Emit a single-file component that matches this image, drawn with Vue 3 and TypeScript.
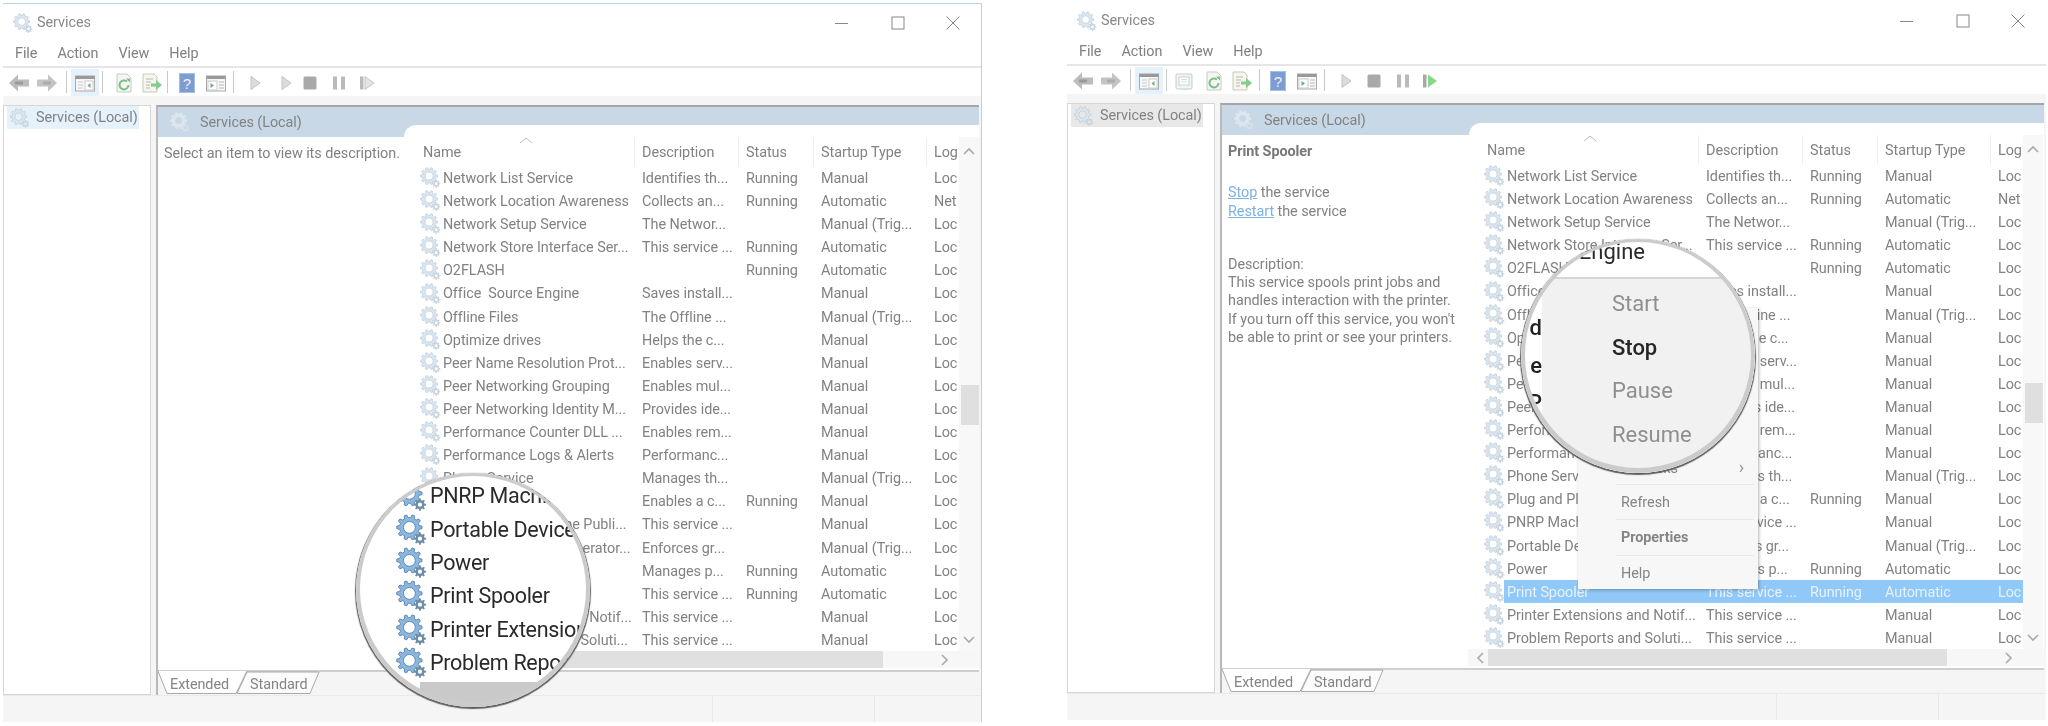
<template>
  <div class="page">
    <svg class="defs" width="0" height="0">
      <symbol id="gear" viewBox="0 0 22 22">
        <path class="gear-big" fill-rule="evenodd" :d="bigGear" />
        <path class="gear-small" fill-rule="evenodd" :d="smallGear" />
      </symbol>
    </svg>

    <section v-for="win in windows" :key="win.id" class="win" :class="win.id">
      <header class="titlebar">
        <svg class="gear title-gear"><use href="#gear" /></svg>
        <span class="title">Services</span>
        <div class="caption">
          <svg viewBox="0 0 16 16"><path d="M1 8.5h13" /></svg>
          <svg viewBox="0 0 16 16"><rect x="2" y="2" width="12" height="12" /></svg>
          <svg viewBox="0 0 16 16"><path d="M1.5 1.5l13 13M14.5 1.5l-13 13" /></svg>
        </div>
      </header>

      <nav class="menubar">
        <span>File</span><span>Action</span><span>View</span><span>Help</span>
      </nav>

      <div class="toolbar">
        <template v-for="(item, i) in win.tools" :key="i">
          <div v-if="item.icon === 'sep'" class="tool-sep" :style="{ width: item.w + 'px' }"><i></i></div>
          <div v-else class="tool" :class="{ active: item.icon === 'tree' }" :style="{ width: item.w + 'px' }">
            <svg viewBox="0 0 20 20" v-html="icons[item.icon]"></svg>
          </div>
        </template>
      </div>

      <div class="work">
        <aside class="tree">
          <div class="tree-item">
            <svg class="gear"><use href="#gear" /></svg>
            <span>Services (Local)</span>
          </div>
        </aside>

        <div class="panel">
          <div class="band">
            <svg class="gear band-gear"><use href="#gear" /></svg>
            <span class="band-label">Services (Local)</span>
            <div class="band-tab"></div>
          </div>

          <div class="body">
            <div v-if="win.id === 'first'" class="details">
              <p>Select an item to view its description.</p>
            </div>
            <div v-else class="details">
              <p class="details-name">Print Spooler</p>
              <p class="details-links"><a>Stop</a> the service<br /><a>Restart</a> the service</p>
              <p>
                Description:<br />
                This service spools print jobs and<br />
                handles interaction with the printer.<br />
                If you turn off this service, you won't<br />
                be able to print or see your printers.
              </p>
            </div>

            <div class="list">
              <div class="list-main">
                <div class="table">
                  <div class="thead">
                    <div class="th th-name">
                      Name
                      <svg class="sort" viewBox="0 0 14 7"><path d="M1 6l6-5 6 5" /></svg>
                    </div>
                    <div class="th">Description</div>
                    <div class="th">Status</div>
                    <div class="th">Startup Type</div>
                    <div class="th">Log</div>
                  </div>
                  <div
                    v-for="row in rows"
                    :key="row.name"
                    class="row"
                    :class="{ selected: win.id === 'second' && row.name === 'Print Spooler' }"
                  >
                    <div class="row-icon"><svg class="gear"><use href="#gear" /></svg></div>
                    <div class="cell">{{ row.name }}</div>
                    <div class="cell">{{ row.desc }}</div>
                    <div class="cell">{{ row.status }}</div>
                    <div class="cell">{{ row.startup }}</div>
                    <div class="cell">{{ row.log }}</div>
                  </div>
                </div>
                <div class="vscroll">
                  <svg viewBox="0 0 12 8"><path d="M1 7l5-5 5 5" /></svg>
                  <div class="vthumb"></div>
                  <svg class="vdown" viewBox="0 0 12 8"><path d="M1 1l5 5 5-5" /></svg>
                </div>
              </div>
              <div class="hscroll">
                <svg viewBox="0 0 8 12"><path d="M7 1L2 6l5 5" /></svg>
                <div class="hthumb"></div>
                <svg class="hright" viewBox="0 0 8 12"><path d="M1 1l5 5-5 5" /></svg>
              </div>
            </div>
          </div>

          <div class="tabs">
            <svg class="tab-shapes" viewBox="0 0 170 24">
              <path class="tab-back" d="M79 23.500L89 2h72l-9 21.500z" />
              <path class="tab-front" d="M0 1l9 22.500h69L89 1" />
            </svg>
            <span class="tab-extended">Extended</span>
            <span class="tab-standard">Standard</span>
          </div>
        </div>
      </div>

      <footer class="status">
        <div class="status-main"></div>
        <div class="status-mid"></div>
      </footer>
    </section>

    <!-- context menu of the second window -->
    <div class="menu">
      <div class="menu-top">
        <div v-for="t in ['Start', 'Stop', 'Pause', 'Resume', 'Restart']" :key="t" class="menu-item">{{ t }}</div>
        <div class="menu-item">All Tasks<span class="menu-arrow">›</span></div>
      </div>
      <div class="menu-item big sep">Refresh</div>
      <div class="menu-item big sep bold">Properties</div>
      <div class="menu-item big sep">Help</div>
    </div>

    <!-- magnifiers -->
    <div class="lens lens-list">
      <div v-for="name in lensNames" :key="name" class="lens-row">
        <svg class="gear lens-gear"><use href="#gear" /></svg>
        <span>{{ name }}</span>
      </div>
      <div class="lens-hthumb"></div>
    </div>

    <div class="lens lens-menu">
      <div class="lens-head">Engine</div>
      <div class="lens-main">
        <div class="lens-strip"><span>d</span><span>e</span><span>P</span></div>
        <div class="lens-items">
          <div>Start</div>
          <div class="on">Stop</div>
          <div>Pause</div>
          <div>Resume</div>
        </div>
      </div>
    </div>
  </div>
</template>

<script setup lang="ts">
type Tool = { icon: string; w: number }

// makes a toothed wheel path with a round hole in it
const gearPath = (cx: number, cy: number, ro: number, ri: number, teeth: number, hole: number) => {
  const step = (Math.PI * 2) / teeth
  let d = ''
  for (let i = 0; i < teeth; i++) {
    const a = i * step
    const pts = [
      [ri, a - step * 0.32],
      [ro, a - step * 0.16],
      [ro, a + step * 0.16],
      [ri, a + step * 0.32]
    ]
    pts.forEach(([r, t], j) => {
      const x = (cx + r * Math.cos(t)).toFixed(2)
      const y = (cy + r * Math.sin(t)).toFixed(2)
      d += `${i === 0 && j === 0 ? 'M' : 'L'}${x} ${y}`
    })
  }
  d += `ZM${cx - hole} ${cy}a${hole} ${hole} 0 1 0 ${hole * 2} 0a${hole} ${hole} 0 1 0 ${-hole * 2} 0Z`
  return d
}

const bigGear = gearPath(9.5, 9.5, 9, 7, 10, 4.2)
const smallGear = gearPath(17, 17.5, 4.4, 3.2, 8, 1.5)

const icons: Record<string, string> = {
  back: '<path d="M0 10l9-8.500V6.500h11v7H9v5z" fill="#bcbcbc"/><path d="M6 8.500h8v3H6z" fill="#9a9a9a"/>',
  fwd: '<path d="M20 10l-9-8.500V6.500H0v7h11v5z" fill="#c4c4c4"/><path d="M6 8.500h8v3H6z" fill="#adadad"/>',
  tree: '<rect x=".5" y="3" width="19" height="15" fill="#f7f7f7" stroke="#aaa"/><path d="M.5 3h19v3H.5z" fill="#999"/><path d="M3 9h5M3 12h5M3 15h5" stroke="#ccc"/><rect x="10" y="8" width="8" height="9" fill="#fff" stroke="#ccc"/><path d="M15.500 10v5l-3-2.500z" fill="#6fae7d"/>',
  props: '<rect x="2" y="3" width="16" height="15" rx="1" fill="#f2f5f6" stroke="#c3cdd2"/><rect x="5" y="6" width="10" height="8" fill="#fff" stroke="#c9d2d6"/><path d="M7 8.500h6M7 11h6M8 18.500h6" stroke="#cfe3dc"/>',
  refresh: '<path d="M3 1h10l4 4v14H3z" fill="#f5f6f3" stroke="#c5cbc5"/><path d="M14.500 12a4.500 4.500 0 1 1-1.500-3.400" fill="none" stroke="#79c184" stroke-width="2"/><path d="M12 5.500h4v4z" fill="#79c184"/>',
  export: '<path d="M1 1h11l3 3v15H1z" fill="#f7f6ee" stroke="#cbc8b8"/><path d="M4 6h7M4 9h5M4 12h4M4 15h4" stroke="#b9b9ad"/><path d="M9 10.500h5V7l6 5-6 5v-3.500H9z" fill="#86cc8b"/>',
  help: '<rect x="2" y="0" width="16" height="20" fill="#7c9cd2"/><path d="M2.500.5h15v19h-15z" fill="none" stroke="#a9bfe2"/><text x="10" y="15.500" text-anchor="middle" font-size="15" font-family="Liberation Sans, sans-serif" fill="#eef3fb">?</text>',
  view: '<rect x=".5" y="3" width="19" height="15" fill="#f7f7f7" stroke="#aaa"/><path d="M.5 3h19v3H.5z" fill="#999"/><path d="M13 9h5M13 12h5M13 15h5" stroke="#bbb"/><rect x="2" y="8" width="9" height="9" fill="#fff" stroke="#ccc"/><path d="M4.500 10v5l3.500-2.500z" fill="#6fae7d"/>',
  play: '<path d="M6 3.500l9 6.500-9 6.500z" fill="#dcdcdc" stroke="#c2c2c2"/>',
  stop: '<rect x="3.500" y="3.500" width="13" height="13" rx="1.500" fill="#a9a9a9"/>',
  pause: '<path d="M4 3.500h4v13H4zM12 3.500h4v13h-4z" fill="#bababa"/>',
  resume: '<path d="M3 3.500h3.500v13H3z" fill="#bababa"/><path d="M8 3.500l9 6.500-9 6.500z" fill="#e4e4e4" stroke="#c6c6c6"/>',
  resumeOn: '<path d="M3 3.500h3.500v13H3z" fill="#a8a8a8"/><path d="M8 3.500l9 6.500-9 6.500z" fill="#86d889"/>'
}

const windows: { id: string; tools: Tool[] }[] = [
  {
    id: 'first',
    tools: [
      { icon: 'back', w: 28 }, { icon: 'fwd', w: 28 }, { icon: 'sep', w: 10 }, { icon: 'tree', w: 28 },
      { icon: 'sep', w: 6 }, { icon: 'refresh', w: 37 }, { icon: 'export', w: 19 }, { icon: 'sep', w: 12 },
      { icon: 'help', w: 28 }, { icon: 'view', w: 30 }, { icon: 'sep', w: 4 }, { icon: 'play', w: 39 },
      { icon: 'play', w: 23 }, { icon: 'stop', w: 25 }, { icon: 'pause', w: 33 }, { icon: 'resume', w: 23 }
    ]
  },
  {
    id: 'second',
    tools: [
      { icon: 'back', w: 28 }, { icon: 'fwd', w: 28 }, { icon: 'sep', w: 10 }, { icon: 'tree', w: 28 },
      { icon: 'sep', w: 6 }, { icon: 'props', w: 30 }, { icon: 'refresh', w: 30 }, { icon: 'export', w: 26 },
      { icon: 'sep', w: 8 }, { icon: 'help', w: 30 }, { icon: 'view', w: 28 }, { icon: 'sep', w: 6 },
      { icon: 'play', w: 37 }, { icon: 'stop', w: 19 }, { icon: 'pause', w: 39 }, { icon: 'resumeOn', w: 16 }
    ]
  }
]

const rows = [
  { name: 'Network List Service', desc: 'Identifies th...', status: 'Running', startup: 'Manual', log: 'Loc' },
  { name: 'Network Location Awareness', desc: 'Collects an...', status: 'Running', startup: 'Automatic', log: 'Net' },
  { name: 'Network Setup Service', desc: 'The Networ...', status: '', startup: 'Manual (Trig...', log: 'Loc' },
  { name: 'Network Store Interface Ser...', desc: 'This service ...', status: 'Running', startup: 'Automatic', log: 'Loc' },
  { name: 'O2FLASH', desc: '', status: 'Running', startup: 'Automatic', log: 'Loc' },
  { name: 'Office  Source Engine', desc: 'Saves install...', status: '', startup: 'Manual', log: 'Loc' },
  { name: 'Offline Files', desc: 'The Offline ...', status: '', startup: 'Manual (Trig...', log: 'Loc' },
  { name: 'Optimize drives', desc: 'Helps the c...', status: '', startup: 'Manual', log: 'Loc' },
  { name: 'Peer Name Resolution Prot...', desc: 'Enables serv...', status: '', startup: 'Manual', log: 'Loc' },
  { name: 'Peer Networking Grouping', desc: 'Enables mul...', status: '', startup: 'Manual', log: 'Loc' },
  { name: 'Peer Networking Identity M...', desc: 'Provides ide...', status: '', startup: 'Manual', log: 'Loc' },
  { name: 'Performance Counter DLL ...', desc: 'Enables rem...', status: '', startup: 'Manual', log: 'Loc' },
  { name: 'Performance Logs & Alerts', desc: 'Performanc...', status: '', startup: 'Manual', log: 'Loc' },
  { name: 'Phone Service', desc: 'Manages th...', status: '', startup: 'Manual (Trig...', log: 'Loc' },
  { name: 'Plug and Play', desc: 'Enables a c...', status: 'Running', startup: 'Manual', log: 'Loc' },
  { name: 'PNRP Machine Name Publi...', desc: 'This service ...', status: '', startup: 'Manual', log: 'Loc' },
  { name: 'Portable Device Enumerator...', desc: 'Enforces gr...', status: '', startup: 'Manual (Trig...', log: 'Loc' },
  { name: 'Power', desc: 'Manages p...', status: 'Running', startup: 'Automatic', log: 'Loc' },
  { name: 'Print Spooler', desc: 'This service ...', status: 'Running', startup: 'Automatic', log: 'Loc' },
  { name: 'Printer Extensions and Notif...', desc: 'This service ...', status: '', startup: 'Manual', log: 'Loc' },
  { name: 'Problem Reports and Soluti...', desc: 'This service ...', status: '', startup: 'Manual', log: 'Loc' }
]

const lensNames = ['PNRP Machine', 'Portable Device', 'Power', 'Print Spooler', 'Printer Extensions', 'Problem Reports']
</script>

<style>
html,
body {
  margin: 0;
  background: #fff;
}
</style>

<style scoped>
.page {
  position: relative;
  display: flex;
  width: 2048px;
  height: 726px;
  overflow: hidden;
  background: #fff;
  font-family: Roboto, "Open Sans", sans-serif;
  font-size: 14.4px;
  letter-spacing: -0.05px;
  color: #828282;
}

.defs {
  position: absolute;
}

.gear-big {
  fill: var(--gear-fill, #dbe6ef);
  stroke: var(--gear-line, #b7c9d9);
  stroke-width: 0.7;
}

.gear-small {
  fill: var(--gear-small, #c9d5de);
}

.gear {
  width: 20px;
  height: 20px;
  flex-shrink: 0;
}

.win {
  width: 979px;
  height: 719px;
  box-sizing: border-box;
  filter: blur(0.35px);
}

.first {
  margin: 3px 0 0 3px;
  border-top: 1px solid #b3d5df;
  border-right: 1px solid #b3d5df;
}

.second {
  margin: 3px 0 0 85px;
  transform: translateY(-1px);
  width: 979px;
}

.titlebar {
  display: flex;
  align-items: center;
  box-sizing: border-box;
  height: 36px;
  padding: 1px 0 0 10px;
}

.title {
  margin-left: 4px;
  color: #888;
}

.caption {
  display: flex;
  gap: 39.5px;
  margin-left: auto;
  margin-right: 20px;
}

.caption svg {
  width: 16px;
  height: 16px;
  fill: none;
  stroke: #888;
  stroke-width: 1;
}

.menubar {
  display: flex;
  gap: 20px;
  align-items: center;
  box-sizing: border-box;
  height: 28px;
  padding: 1px 0 0 12px;
  border-bottom: 2px solid #e6e6e6;
  color: #808080;
}

.toolbar {
  display: flex;
  align-items: center;
  height: 28px;
  padding-left: 2px;
}

.tool {
  display: flex;
  align-items: center;
  justify-content: center;
  flex-shrink: 0;
  height: 26px;
  padding-top: 2px;
  box-sizing: border-box;
}

.tool svg {
  width: 20px;
  height: 20px;
  flex-shrink: 0;
}

.tool.active {
  height: 27px;
  background: #e5f1fb;
}

.tool-sep {
  display: flex;
  justify-content: center;
  height: 22px;
  flex-shrink: 0;
}

.tool-sep i {
  width: 1px;
  background: #c9c9c9;
}

.work {
  display: flex;
  gap: 5px;
  height: 599px;
  box-sizing: border-box;
  padding: 9px 2px 0 0;
  background: #f5f5f5;
}

.tree {
  width: 148px;
  flex-shrink: 0;
  box-sizing: border-box;
  padding: 0 0 0 3px;
  border: 1px solid #d6d6d6;
  background: #fff;
}

.tree-item {
  display: flex;
  align-items: center;
  gap: 6px;
  width: 132px;
  height: 23px;
  padding-left: 3px;
  box-sizing: border-box;
  background: #e5f1fb;
  white-space: nowrap;
}

.second .tree-item {
  background: #e8e8e8;
}

.panel {
  flex: 1;
  display: flex;
  flex-direction: column;
  min-width: 0;
  border-top: 2px solid #a6a6a6;
  border-left: 2px solid #b9b9b9;
}

.band {
  display: flex;
  align-items: center;
  height: 30px;
  flex-shrink: 0;
  padding-left: 12px;
  background: #c9d8e7;
}

.band-gear {
  --gear-fill: #dde6ef;
  --gear-line: #dfe8f0;
  --gear-small: #d6e0ea;
}

.band-label {
  margin-left: 10px;
  white-space: nowrap;
}

.band-tab {
  align-self: flex-end;
  width: 575px;
  height: 12px;
  margin-left: auto;
  background: #fff;
  border-top-left-radius: 12px;
}

.body {
  display: flex;
  height: 535px;
  flex-shrink: 0;
  box-sizing: border-box;
  background: #fff;
  border-bottom: 2px solid #cfcfcf;
}

.details {
  width: 246px;
  flex-shrink: 0;
  box-sizing: border-box;
  padding: 8px 0 0 6px;
  line-height: 18.3px;
  white-space: nowrap;
}

.details p {
  margin: 0;
}

.details-name {
  font-weight: 700;
  color: #777;
}

.details .details-links {
  margin: 23px 0 35px;
}

.details a {
  color: #7fb1e3;
  text-decoration: underline;
}

.list {
  flex: 1;
  min-width: 0;
}

.list-main {
  display: flex;
  height: 514px;
}

.table {
  width: 555px;
  flex-shrink: 0;
}

.thead,
.row {
  display: grid;
  grid-template-columns: 36px 202px 104px 75px 113px 25px;
}

.thead {
  height: 29px;
  line-height: 31px;
  grid-template-columns: 238px 104px 75px 113px 25px;
}

.th {
  position: relative;
  white-space: nowrap;
}

.th::before {
  content: "";
  position: absolute;
  left: -8px;
  top: 0;
  bottom: 1px;
  width: 1px;
  background: #eeeeee;
}

.th-name {
  padding-left: 19px;
}

.th-name::before {
  display: none;
}

.sort {
  position: absolute;
  left: 115px;
  top: 0;
  width: 14px;
  height: 7px;
  fill: none;
  stroke: #bbb;
}

.row {
  height: 23.1px;
  grid-template-rows: 23.1px;
  line-height: 26.5px;
}

.row-icon {
  display: flex;
  align-items: center;
  padding-left: 16px;
}

.cell {
  white-space: pre;
  overflow: hidden;
}

.row .cell:nth-child(2) {
  padding-left: 3px;
}

.row .gear {
  width: 21px;
  height: 21px;
}

.row.selected .cell {
  background: #90c8f7;
  color: #e6f2fd;
}

.vscroll {
  display: flex;
  flex-direction: column;
  align-items: center;
  width: 20px;
  padding-top: 10px;
  box-sizing: border-box;
  background: #f8f8f8;
}

.vscroll svg {
  width: 12px;
  height: 8px;
  flex-shrink: 0;
  fill: none;
  stroke: #aaa;
  stroke-width: 1.6;
}

.vthumb {
  width: 18px;
  height: 40px;
  margin-top: 230px;
  margin-left: 2px;
  background: #dfdfdf;
}

.vscroll .vdown {
  margin-top: auto;
  margin-bottom: 7px;
}

.hscroll {
  display: flex;
  align-items: center;
  height: 17px;
  background: #f7f7f7;
}

.hscroll svg {
  width: 8px;
  height: 12px;
  flex-shrink: 0;
  margin-left: 8px;
  fill: none;
  stroke: #aaa;
  stroke-width: 1.6;
}

.hthumb {
  width: 459px;
  height: 100%;
  margin-left: 4px;
  background: #e0e0e0;
}

.hscroll .hright {
  margin-left: 58px;
}

.tabs {
  position: relative;
  display: flex;
  align-items: center;
  flex: 1;
  padding-top: 2px;
  color: #858585;
}

.tab-shapes {
  position: absolute;
  left: 0;
  top: -2px;
  width: 170px;
  height: 24px;
  fill: none;
  stroke: #a9a9a9;
}

.tab-back {
  fill: #fbfbfb;
}

.tab-front {
  fill: #fff;
}

.tab-extended,
.tab-standard {
  position: relative;
}

.tab-extended {
  margin-left: 12px;
}

.tab-standard {
  margin-left: 21px;
}

.status {
  display: flex;
  height: 27px;
  box-sizing: border-box;
  border-top: 1px solid #eaeaea;
  background: #f5f5f5;
}

.status-main {
  width: 709px;
  border-right: 1px solid #e8e8e8;
}

.status-mid {
  width: 161px;
  border-right: 1px solid #e8e8e8;
}

.menu {
  position: absolute;
  left: 1578px;
  top: 308px;
  width: 180px;
  height: 281px;
  box-sizing: border-box;
  background: #f7f7f7;
  box-shadow: 1px 1px 3px rgba(0, 0, 0, 0.3);
  color: #858585;
  filter: blur(0.3px);
}

.menu-top {
  height: 176px;
  padding-top: 1px;
  box-sizing: border-box;
}

.menu-item {
  position: relative;
  height: 29px;
  line-height: 29px;
  padding-left: 43px;
}

.menu-item.big {
  height: 35.3px;
  line-height: 37px;
}

.menu-item.sep::before {
  content: "";
  position: absolute;
  left: 38px;
  right: 4px;
  top: 0;
  height: 1px;
  background: #e9e9e9;
}

.menu-item.bold {
  font-weight: 700;
}

.menu-arrow {
  position: absolute;
  right: 14px;
  top: -2px;
  font-size: 18px;
  color: #999;
}

.lens {
  position: absolute;
  width: 234px;
  height: 234px;
  overflow: hidden;
  border-radius: 50%;
  background: #fff;
  box-shadow: 0 1px 1px 1px #5f5f5f;
  font-size: 22px;
  letter-spacing: 0;
  filter: blur(0.3px);
}

.lens::after {
  content: "";
  position: absolute;
  inset: 0;
  border-radius: 50%;
  box-shadow: inset 0 -1px 0 4px #cbcbcb;
}

.lens-list {
  left: 356px;
  top: 473px;
  padding-top: 6px;
  box-sizing: border-box;
  color: #2a2a2a;
  font-size: 21.5px;
  letter-spacing: -0.3px;
}

.lens-row {
  display: flex;
  align-items: center;
  gap: 3px;
  height: 33.4px;
  padding-left: 40px;
  white-space: nowrap;
}

.lens-gear {
  width: 31px;
  height: 31px;
  --gear-fill: #8db6dc;
  --gear-line: #5c8ab8;
  --gear-small: #6d8ca8;
}

.lens-hthumb {
  height: 60px;
  margin-left: 64px;
  margin-top: 3px;
  background: #c9c9c9;
}

.lens-menu {
  left: 1521px;
  top: 239px;
  display: flex;
  flex-direction: column;
  color: #8f8f8f;
}

.lens-head {
  flex-shrink: 0;
  height: 38px;
  box-sizing: border-box;
  padding-right: 110px;
  line-height: 26px;
  text-align: right;
  color: #2a2a2a;
}

.lens-main {
  display: flex;
  flex: 1;
}

.lens-strip {
  display: flex;
  flex-direction: column;
  align-items: flex-end;
  width: 21px;
  flex-shrink: 0;
  padding-top: 32px;
  line-height: 37.5px;
  color: #222;
  font-weight: 500;
}

.lens-items {
  flex: 1;
  padding: 3px 0 0 70px;
  background: #f1f1f1;
  border-top: 2px solid #d5d5d5;
  box-sizing: border-box;
}

.lens-items div {
  height: 43.7px;
  line-height: 43.7px;
}

.lens-items .on {
  color: #262626;
  font-weight: 500;
}
</style>
